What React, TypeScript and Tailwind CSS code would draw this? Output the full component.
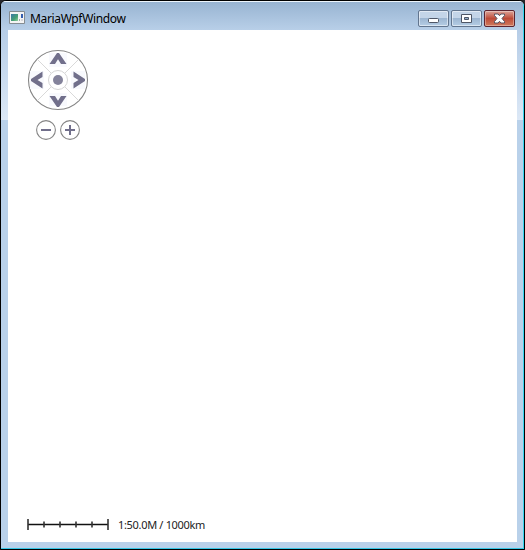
function Compass() {
  return (
    <svg width="62" height="62" viewBox="0 0 62 62" fill="none">
      <circle cx="31" cy="31" r="29.5" fill="#fff" stroke="#858585" strokeWidth="1.1" />
      <path d="M10.5 10.5 51.5 51.5M51.5 10.5 10.5 51.5" stroke="#d9d9d9" />
      <g fill="#f8f9fd">
        <path d="M22 4h18v14H22zM22 44h18v13H22zM3 22h14v18H3zM44 22h14v18H44z" />
      </g>
      <circle cx="31" cy="31" r="9.5" fill="#fff" stroke="#d5d5d5" />
      <circle cx="31" cy="31" r="5" fill="#84839b" />
      <g fill="#716f8b">
        <path d="M30 4h2l7.5 11H34l-3-4.8-3 4.8h-5.5z" />
        <path d="M30 58h2l7.5-11H34l-3 4.8-3-4.8h-5.5z" />
        <path d="M4 30v2l11.5 7.5V34l-5-3 5-3v-5.5z" />
        <path d="M58 30v2l-11.5 7.5V34l5-3-5-3v-5.5z" />
      </g>
    </svg>
  );
}

function ZoomButton({ plus = false }: { plus?: boolean }) {
  return (
    <button className="size-5">
      <svg width="20" height="20" viewBox="0 0 20 20" fill="none">
        <circle cx="10" cy="10" r="9.4" stroke="#858585" strokeWidth="1.1" />
        <path d={plus ? "M5 10h10M10 5v10" : "M5 10h10"} stroke="#716f8b" strokeWidth="2" />
      </svg>
    </button>
  );
}

const captionButton =
  "flex h-[17px] items-center justify-center rounded-[2px] border border-[#62758e] bg-linear-to-b from-[#c4d5e8] from-50% via-[#9db6d1] via-50% to-[#b5cde5] shadow-[inset_0_0_0_1px_#ffffff80]";

function TitleBar() {
  return (
    <header className="flex h-7 shrink-0 items-start bg-linear-to-b from-[#98b4d2] to-[#b8cfe8] pl-2 pr-2">
      <svg className="mt-[9px]" width="16" height="13" viewBox="0 0 16 13">
        <defs>
          <linearGradient id="app" x1="0" y1="0" x2="1" y2="1">
            <stop stopColor="#3977a8" />
            <stop offset=".6" stopColor="#46a073" />
            <stop offset="1" stopColor="#95d0a0" />
          </linearGradient>
        </defs>
        <path d="M.5.5h15v12H.5z" fill="#f4f4f4" stroke="#858c91" />
        <path d="M2 3h7v7H2z" fill="url(#app)" />
        <path d="M10 8h1v2h-1z" fill="#9eafa8" />
        <path d="M12 3h2v4h-2z" fill="#365faf" />
        <path d="M12 8h2v2h-2z" fill="#d8d8dc" />
      </svg>
      <h1 className="ml-[5px] mt-[9px] h-4 w-[97px] whitespace-nowrap text-[12px] leading-4 tracking-[-0.35px] text-black">
        MariaWpfWindow
      </h1>
      <div className="ml-auto mt-2 flex gap-[2px]">
        <button className={`${captionButton} w-[31px]`}>
          <svg className="mt-[3px]" width="11" height="5" viewBox="0 0 11 5">
            <rect x=".5" y=".5" width="10" height="4" rx="1" fill="#fff" stroke="#4e5666" />
          </svg>
        </button>
        <button className={`${captionButton} w-[31px]`}>
          <svg width="11" height="9" viewBox="0 0 11 9">
            <path d="M.5.5h10v8H.5z" fill="#fff" stroke="#4e5666" />
            <path d="M3.5 3.5h4v2h-4z" fill="#93adc9" stroke="#4e5666" />
          </svg>
        </button>
        <button className="flex h-[17px] w-[31px] items-center justify-center rounded-[2px] border border-[#5c2430] bg-linear-to-b from-[#dba298] from-0% via-[#bd4a38] via-50% to-[#d07a5e] shadow-[inset_0_0_0_1px_#ffffff55]">
          <svg width="13" height="11" viewBox="0 0 13 11">
            <path
              d="M1.5 1h3.6l1.4 1.7L7.9 1h3.6v1.5L9 5.5l2.5 3V10H7.9L6.5 8.3 5.1 10H1.5V8.5l2.5-3-2.5-3z"
              fill="#fff"
              stroke="#565463"
            />
          </svg>
        </button>
      </div>
    </header>
  );
}

function ScaleBar() {
  return (
    <div className="flex h-4 items-center">
      <svg className="-mt-px" width="82" height="11" viewBox="0 0 82 11">
        <path d="M1 5.5h80" stroke="#111" strokeWidth="1.3" />
        <path d="M1 0v11M81 0v11" stroke="#333" strokeWidth="1.6" />
        <path d="M17 2.5v6M33 2.5v6M49 2.5v6M65 2.5v6" stroke="#333" strokeWidth="1.6" />
      </svg>
      <span className="ml-[9px] whitespace-nowrap text-[11px] leading-4 tracking-[-0.32px] text-[#222]">
        1:50.0M / 1000km
      </span>
    </div>
  );
}

export default function App() {
  return (
    <div className="h-[550px] w-[525px] bg-[#26262b] font-['Noto_Sans','Open_Sans',sans-serif]">
      <div className="flex h-full w-full flex-col overflow-hidden rounded-t-[6px] border border-black bg-[#b9d1ea]">
        <div className="flex min-h-0 grow flex-col border-b border-r border-t border-b-[#35c5e5] border-r-[#35d5ef] border-t-[#edf5fc]">
          <TitleBar />
          <div className="flex min-h-0 grow bg-[#b9d1ea] pb-[6px]">
            <div className="flex w-[7px] flex-col">
              <div className="h-[90px] bg-linear-to-b from-[#b6cde7] to-[#dce8f6]" />
            </div>
            <main className="flex w-[509px] flex-col bg-white pb-[9px] pl-[19px] pt-[19px]">
              <Compass />
              <div className="ml-[9px] mt-[9px] flex gap-1">
                <ZoomButton />
                <ZoomButton plus />
              </div>
              <div className="mt-auto">
                <ScaleBar />
              </div>
            </main>
            <div className="flex w-[6px] flex-col">
              <div className="h-[90px] bg-linear-to-b from-[#b6cde7] to-[#dce8f6]" />
            </div>
          </div>
        </div>
      </div>
    </div>
  );
}
